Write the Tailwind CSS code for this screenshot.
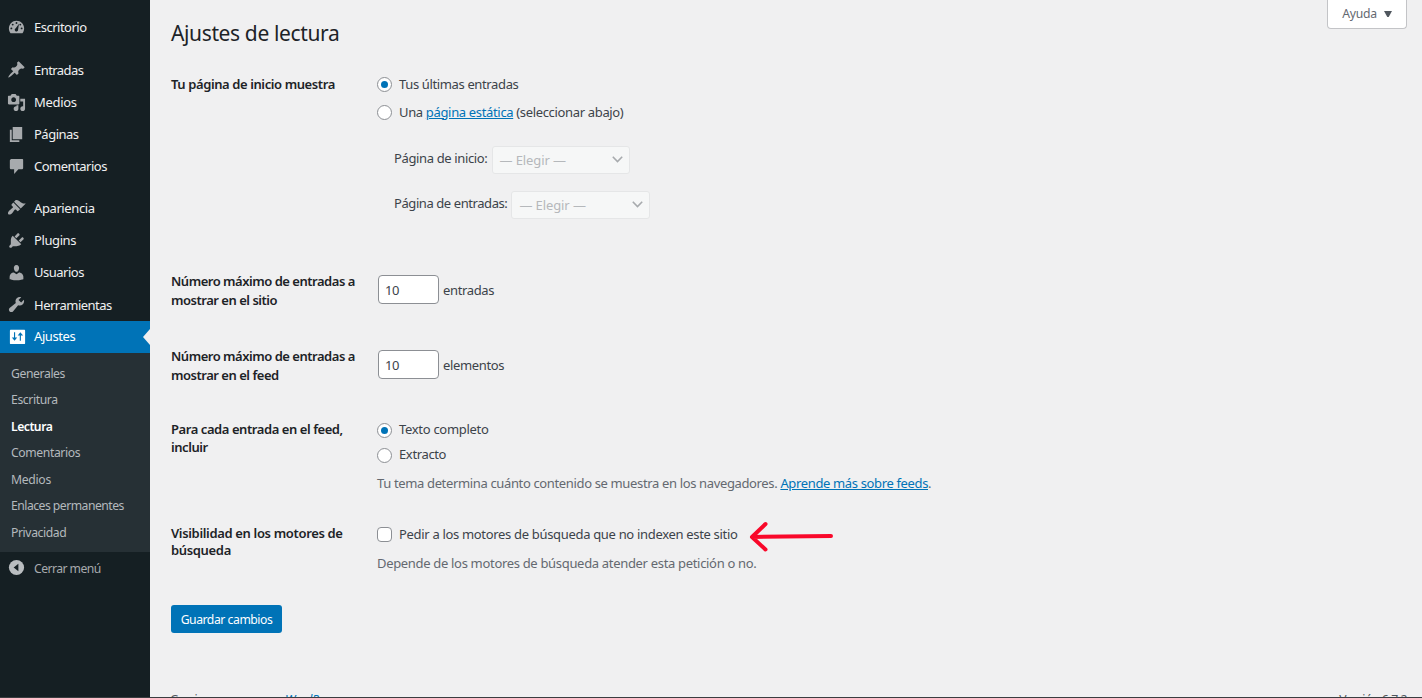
<!DOCTYPE html>
<html lang="es">
<head>
    <meta charset="UTF-8">
    <meta name="viewport" content="width=device-width, initial-scale=1.0">
    <title>Ajustes de lectura</title>

    <!-- Include Tailwind CSS -->
    <script src="https://cdn.jsdelivr.net/npm/@tailwindcss/browser@4"></script>
</head>
<body class="relative flex h-[698px] overflow-hidden bg-[#f0f0f1] font-['Noto_Sans',sans-serif] text-[13px] text-[#3c434a]">

    <!-- Admin Menu -->
    <nav class="w-[150px] h-full shrink-0 bg-[#151f23] text-[#f0f0f1] pt-[12px]">
        <ul class="tracking-[-0.5px]">
            <li class="flex items-center h-8 pl-[7px] gap-2">
                <svg class="size-[19px] mb-[3px] text-[#a7aaad]" viewBox="0 0 20 20" fill="currentColor"><path d="M3.76 17h12.48c1.1-1.37 1.76-3.11 1.76-5 0-4.42-3.58-8-8-8s-8 3.58-8 8c0 1.89.66 3.63 1.76 5z"/><g fill="#151f23"><circle cx="10" cy="6.3" r="1"/><circle cx="6" cy="8" r="1"/><circle cx="4.6" cy="12" r="1"/><circle cx="15.4" cy="12" r="1"/><circle cx="14" cy="8" r="1"/><path d="M12.6 7.2l-.9 6a1.8 1.8 0 1 1-2.5-1.4z"/></g></svg>
                Escritorio
            </li>
            <li class="flex items-center h-8 pl-[7px] gap-2 mt-[11px] tracking-[-0.55px]">
                <svg class="size-[19px] mb-[3px] text-[#a7aaad]" viewBox="0 0 20 20" fill="currentColor"><path d="M10.44 3.02l1.82-1.82 6.36 6.35-1.83 1.82c-1.05-.68-2.48-.57-3.41.36l-.75.75c-.92.93-1.04 2.35-.35 3.41l-1.83 1.82-2.41-2.41-2.8 2.79c-.42.42-3.38 2.71-3.8 2.29s1.86-3.39 2.28-3.81l2.79-2.79L4.1 9.36l1.83-1.82c1.05.69 2.48.57 3.4-.36l.75-.75c.93-.92 1.05-2.35.36-3.41z"/></svg>
                Entradas
            </li>
            <li class="flex items-center h-8 pl-[7px] gap-2 tracking-[-0.3px]">
                <svg class="size-[19px] mb-px text-[#a7aaad]" viewBox="0 0 20 20" fill="currentColor"><path d="M13 11V4c0-.55-.45-1-1-1h-1.67L9 1H5L3.67 3H2c-.55 0-1 .45-1 1v7c0 .55.45 1 1 1h10c.55 0 1-.45 1-1zM7 4.5c1.38 0 2.5 1.12 2.5 2.5S8.38 9.5 7 9.5 4.5 8.38 4.5 7 5.62 4.5 7 4.5zM14 6h5v10.5c0 1.38-1.12 2.5-2.5 2.5S14 17.88 14 16.5s1.12-2.5 2.5-2.5c.17 0 .34.02.5.05V9h-3V6zm-4 8.05V13h2v3.5c0 1.38-1.12 2.5-2.5 2.5S7 17.88 7 16.5 8.12 14 9.5 14c.17 0 .34.02.5.05z"/></svg>
                Medios
            </li>
            <li class="flex items-center h-8 pl-[7px] gap-2">
                <svg class="size-[19px] mb-px text-[#a7aaad]" viewBox="0 0 20 20" fill="currentColor"><path d="M6 15V2h10v13H6zm-1 1h8v2H3V5h2v11z"/></svg>
                Páginas
            </li>
            <li class="flex items-center h-8 pl-[7px] gap-2">
                <svg class="size-[19px] mb-px text-[#a7aaad]" viewBox="0 0 20 20" fill="currentColor"><path d="M5 2h11c.55 0 1 .45 1 1v8.5c0 .8-.7 1.5-1.5 1.5H12l-4.5 5v-5H4.5c-.8 0-1.5-.7-1.5-1.5V3.500C3 2.700 4 2 5 2z"/></svg>
                Comentarios
            </li>
            <li class="flex items-center h-8 pl-[7px] gap-2 mt-[10px] tracking-[-0.4px]">
                <svg class="size-[19px] mb-[3px] text-[#a7aaad]" viewBox="0 0 20 20" fill="currentColor"><path d="M14.48 11.06L7.41 3.99l1.5-1.5c.5-.56 2.3-.47 3.51.32 1.21.8 1.43 1.28 2.91 2.1 1.18.64 2.45 1.26 4.45.85zm-.71.71L6.7 4.7 4.93 6.47c-.39.39-.39 1.02 0 1.41l1.06 1.06c.39.39.39 1.03 0 1.42-.6.6-1.43 1.11-2.21 1.69-.35.26-.7.53-1.01.84C1.43 14.23.4 16.08 1.4 17.07c.99 1 2.84-.03 4.18-1.36.31-.31.58-.66.85-1.02.57-.78 1.08-1.61 1.69-2.21.39-.39 1.02-.39 1.41 0l1.06 1.06c.39.39 1.02.39 1.41 0z"/></svg>
                Apariencia
            </li>
            <li class="flex items-center h-8 pl-[7px] gap-2 tracking-[-0.4px]">
                <svg class="size-[19px] mb-px text-[#a7aaad]" viewBox="0 0 20 20" fill="currentColor"><path d="M13.11 4.36L9.87 7.6 8 5.73l3.24-3.24c.35-.34 1.05-.2 1.56.32.52.51.66 1.21.31 1.55zm-8 1.77l.91-1.12 9.01 9.01-1.19.84c-.71.71-2.63 1.16-3.82 1.16H6.14L4.9 17.26c-.59.59-1.54.59-2.12 0-.59-.58-.59-1.53 0-2.12l1.24-1.24v-3.88c0-1.13.4-3.19 1.09-3.89zm7.26 3.97l3.24-3.24c.34-.35 1.04-.21 1.55.31.52.51.66 1.21.31 1.55l-3.24 3.25z"/></svg>
                Plugins
            </li>
            <li class="flex items-center h-8 pl-[7px] gap-2">
                <svg class="size-[19px] mb-px text-[#a7aaad]" viewBox="0 0 20 20" fill="currentColor"><path d="M10 9.25c-2.27 0-2.73-3.44-2.73-3.44C7 4.02 7.82 2 9.97 2c2.16 0 2.98 2.02 2.71 3.81 0 0-.41 3.44-2.68 3.44zm0 2.57L12.72 10c2.39 0 4.52 2.33 4.52 4.53v2.49s-3.65 1.13-7.24 1.13c-3.65 0-7.24-1.13-7.24-1.13v-2.49c0-2.25 1.94-4.48 4.47-4.48z"/></svg>
                Usuarios
            </li>
            <li class="flex items-center h-8 pl-[7px] pt-px gap-2">
                <svg class="size-[19px] mb-[3px] text-[#a7aaad]" viewBox="0 0 20 20" fill="currentColor"><path d="M16.68 9.77c-1.34 1.34-3.3 1.67-4.95.99l-5.41 6.52c-.99.99-2.59.99-3.58 0s-.99-2.59 0-3.57l6.52-5.42c-.68-1.65-.35-3.61.99-4.95 1.28-1.28 3.12-1.62 4.72-1.06l-2.89 2.89 2.82 2.82 2.86-2.87c.53 1.58.18 3.39-1.08 4.65z"/></svg>
                Herramientas
            </li>
            <li class="flex items-center h-8 pl-[7px] gap-2 bg-[#0073b7] text-white tracking-[-0.4px]">
                <svg class="size-[19px] ml-px -mr-px mb-px" viewBox="0 0 20 20" fill="currentColor"><path d="M18 16V4c0-.55-.45-1-1-1H3c-.55 0-1 .45-1 1v13c0 .55.45 1 1 1h14c.55 0 1-.45 1-1z"/><path fill="#0073b7" d="M6.300 5.500h1.200v5.500H9.700L6.900 14.500 4 11h2.300zM12.400 14.500V9h-2.200L13 5.500 15.900 9h-2.300v5.500z"/></svg>
                Ajustes
                <svg class="ml-auto w-[7px] h-4" viewBox="0 0 7 16" fill="#f0f0f1"><path d="M7 0v16L0 8z"/></svg>
            </li>
        </ul>

        <!-- Submenu -->
        <ul class="h-[199px] bg-[#263035] pt-[8px] pl-[11px] text-[12.2px] leading-[26.45px] tracking-[-0.4px] text-[#b4b9bd]">
            <li>Generales</li>
            <li>Escritura</li>
            <li class="font-semibold text-white tracking-[-0.5px]">Lectura</li>
            <li>Comentarios</li>
            <li class="tracking-[-0.3px]">Medios</li>
            <li class="tracking-[-0.52px]">Enlaces permanentes</li>
            <li>Privacidad</li>
        </ul>

        <div class="flex items-center h-[34px] pl-[7px] gap-2 text-[12.2px] tracking-[-0.55px] text-[#a7aaad]">
            <svg class="size-[19px] mb-[3px] text-[#b9bdc0]" viewBox="0 0 20 20" fill="currentColor"><circle cx="10" cy="10" r="8"/><path fill="#151f23" d="M12 6v8l-5-4z"/></svg>
            Cerrar menú
        </div>
    </nav>

    <!-- Content -->
    <main class="grow pl-[21px] pt-[18px]">
        <h1 class="text-[21px] leading-[30px] tracking-[-0.37px] text-[#1d2327]">Ajustes de lectura</h1>

        <form class="grid grid-cols-[206px_1fr] mt-[27px] tracking-[-0.36px]">
            <div class="h-[197px] leading-[18px] font-semibold text-[#1d2327] tracking-[-0.4px]">Tu página de inicio muestra</div>
            <div>
                <div class="flex items-center h-[18px]">
                    <span class="flex items-center justify-center size-[15px] mr-[7px] rounded-full border border-[#8c8f94] bg-white"><i class="size-[7px] rounded-full bg-[#0073b7]"></i></span>
                    <span class="pt-px">Tus últimas entradas</span>
                </div>
                <div class="flex items-center h-[18px] mt-[10px]">
                    <span class="size-[15px] mr-[7px] rounded-full border border-[#8c8f94] bg-white"></span>
                    <span class="pt-px tracking-[-0.34px]">Una <a href="#" class="text-[#0073b7] underline">página estática</a> (seleccionar abajo)</span>
                </div>
                <div class="flex items-center mt-[25px] pl-[17px]">
                    <span class="mb-[3px]">Página de inicio:</span>
                    <span class="flex items-center justify-between w-[138px] h-7 ml-1 pt-px pl-[7px] pr-[6px] rounded-[3px] border border-[#e5e6e7] bg-[#f6f7f7] text-[#b5b8bb] tracking-[-0.1px]">— Elegir —
                        <svg class="w-[11px] h-[7px] mb-[2px]" viewBox="0 0 11 7" fill="none" stroke="#a7aaad" stroke-width="1.6"><path d="M.8.8l4.7 4.7L10.2.8"/></svg>
                    </span>
                </div>
                <div class="flex items-center mt-[17px] pl-[17px]">
                    <span class="mb-[3px] tracking-[-0.42px]">Página de entradas:</span>
                    <span class="flex items-center justify-between w-[139px] h-7 ml-1 pt-px pl-[7px] pr-[6px] rounded-[3px] border border-[#e5e6e7] bg-[#f6f7f7] text-[#b5b8bb] tracking-[-0.1px]">— Elegir —
                        <svg class="w-[11px] h-[7px] mb-[2px]" viewBox="0 0 11 7" fill="none" stroke="#a7aaad" stroke-width="1.6"><path d="M.8.8l4.7 4.7L10.2.8"/></svg>
                    </span>
                </div>
            </div>

            <div class="h-[75px] leading-[18.5px] font-semibold text-[#1d2327] tracking-[-0.48px]">Número máximo de entradas a<br>mostrar en el sitio</div>
            <div class="flex items-center h-[29px] mt-[3px] pl-px">
                <span class="flex items-center w-[61px] h-[29px] mr-[4px] pt-[2px] pl-[6px] rounded-[4px] border border-[#8c8f94] bg-white">10</span>
                <span class="pt-[2px]">entradas</span>
            </div>

            <div class="h-[74px] leading-[18.5px] font-semibold text-[#1d2327] tracking-[-0.48px]">Número máximo de entradas a<br>mostrar en el feed</div>
            <div class="flex items-center h-[29px] mt-[3px] pl-px">
                <span class="flex items-center w-[61px] h-[29px] mr-[4px] pt-[2px] pl-[6px] rounded-[4px] border border-[#8c8f94] bg-white">10</span>
                <span class="pt-[2px]">elementos</span>
            </div>

            <div class="h-[104px] leading-[17.5px] font-semibold text-[#1d2327] tracking-[-0.43px]">Para cada entrada en el feed,<br>incluir</div>
            <div>
                <div class="flex items-center h-[18px]">
                    <span class="flex items-center justify-center size-[15px] mr-[7px] rounded-full border border-[#8c8f94] bg-white"><i class="size-[7px] rounded-full bg-[#0073b7]"></i></span>
                    <span class="tracking-[-0.3px]">Texto completo</span>
                </div>
                <div class="flex items-center h-[18px] mt-[7px]">
                    <span class="size-[15px] mr-[7px] rounded-full border border-[#8c8f94] bg-white"></span>
                    <span>Extracto</span>
                </div>
                <p class="mt-[10px] leading-[18px] text-[#646970] tracking-[-0.355px]">Tu tema determina cuánto contenido se muestra en los navegadores. <a href="#" class="text-[#0073b7] underline">Aprende más sobre feeds</a>.</p>
            </div>

            <div class="h-[80px] leading-[17px] font-semibold text-[#1d2327] tracking-[-0.34px]">Visibilidad en los motores de<br>búsqueda</div>
            <div>
                <div class="flex items-center h-[18px]">
                    <span class="size-[15px] mr-[7px] rounded-[4px] border border-[#8c8f94] bg-white"></span>
                    <span class="pt-[2px] tracking-[-0.32px]">Pedir a los motores de búsqueda que no indexen este sitio</span>
                </div>
                <p class="mt-[11px] leading-[18px] text-[#646970] tracking-[-0.32px]">Depende de los motores de búsqueda atender esta petición o no.</p>
            </div>
        </form>

        <button class="w-[111px] h-[28px] pt-[2px] rounded-[3px] bg-[#0073b7] text-[12.2px] tracking-[-0.45px] text-white">Guardar cambios</button>

        <footer class="flex justify-between mt-[58px] pr-[15px] text-[12.2px] leading-[18px] tracking-[-0.45px] text-[#50575e]">
            <p class="-ml-px">Gracias por crear con <a href="#" class="italic text-[#0073b7] underline">WordPress</a>.</p>
            <p>Versión 6.7.2</p>
        </footer>
    </main>

    <!-- Help tab -->
    <div class="absolute top-0 right-[15px] flex items-center justify-center gap-[7px] w-20 h-[29px] rounded-b-[4px] border border-t-0 border-[#c3c4c7] bg-white text-[12.2px] tracking-[-0.3px] text-[#646970]">
        Ayuda
        <svg class="w-2 h-[6px]" viewBox="0 0 8 6" fill="#50575e"><path d="M0 0h8L4.700 6H3.300z"/></svg>
    </div>

    <!-- Pointer arrow -->
    <svg class="absolute left-[748px] top-[518px] w-[88px] h-9" viewBox="0 0 88 36" fill="none" stroke="#f9082a" stroke-width="4" stroke-linecap="round" stroke-linejoin="round"><path d="M83 18L4 19M17.500 6L4 19l13.500 12.500"/></svg>

    <div class="absolute bottom-0 left-0 w-full h-px bg-[#3a3d40]"></div>
</body>
</html>
